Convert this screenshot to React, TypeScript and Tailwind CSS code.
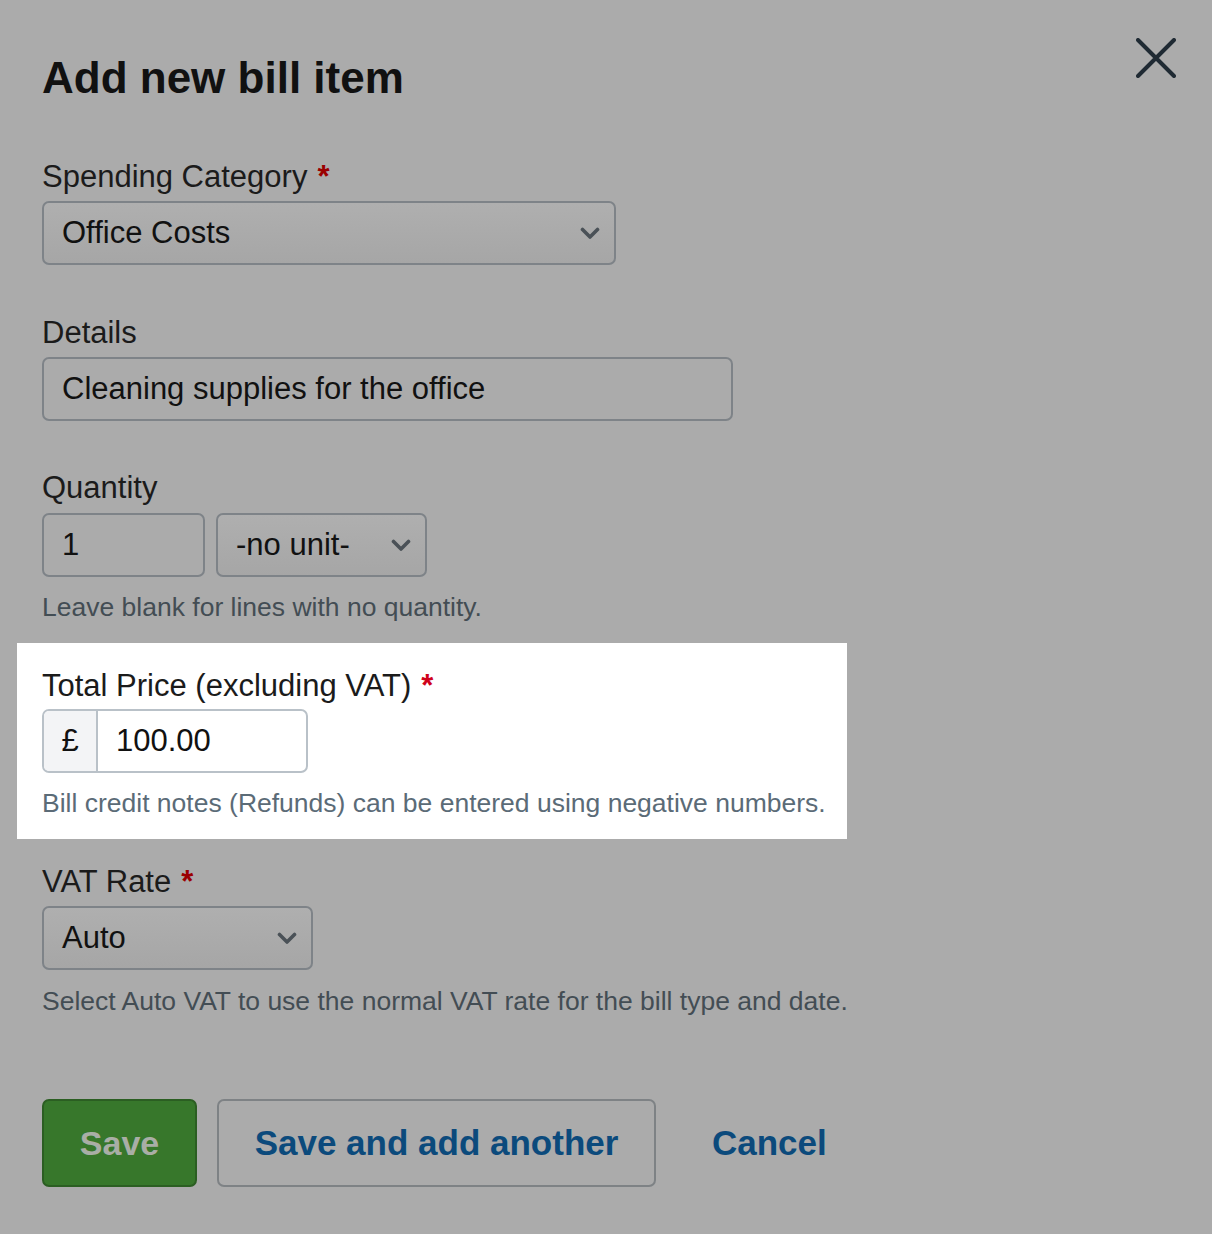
function Chevron() {
  return (
    <svg width="20" height="13" viewBox="0 0 20 13" className="shrink-0">
      <polyline points="2.5,2.5 10,10 17.5,2.5" fill="none" stroke="#4a5157" strokeWidth="3.6" strokeLinecap="round" strokeLinejoin="round" />
    </svg>
  );
}

function Label({ text, required, light }: { text: string; required?: boolean; light?: boolean }) {
  return (
    <div className="text-[31px] leading-[36px] text-[#1b1b1b]">
      {text}
      {required && (
        <span className={light ? "ml-[10px] font-bold text-[#d0021b]" : "ml-[10px] font-bold text-[#9b0000]"}>*</span>
      )}
    </div>
  );
}

function Select({ value, width }: { value: string; width: string }) {
  return (
    <div
      className={`${width} mt-[6px] flex h-[64px] items-center justify-between rounded-[7px] border-2 border-[#7e8388] bg-linear-to-b from-[#afafaf] to-[#a6a6a6] pl-[18px] pr-[14px] text-[31px] text-[#111]`}
    >
      <span>{value}</span>
      <Chevron />
    </div>
  );
}

export default function App() {
  return (
    <div className="min-h-screen bg-[#ababab] pt-[38px] pl-[42px] pr-[36px] font-['Liberation_Sans',Arial,sans-serif]">
      {/* header */}
      <div className="flex items-start justify-between">
        <h1 className="mt-[14px] text-[44px] font-bold leading-[52px] text-[#111]">Add new bill item</h1>
        <svg width="40" height="40" viewBox="0 0 40 40">
          <path d="M2 2 L38 38 M38 2 L2 38" stroke="#1f2a33" strokeWidth="4" strokeLinecap="round" />
        </svg>
      </div>

      {/* spending category */}
      <div className="mt-[55px]">
        <Label text="Spending Category" required />
        <Select value="Office Costs" width="w-[574px]" />
      </div>

      {/* details */}
      <div className="mt-[50px]">
        <Label text="Details" />
        <div className="mt-[6px] flex h-[64px] w-[691px] items-center rounded-[7px] border-2 border-[#7e8388] pl-[18px] text-[31px] text-[#111]">
          Cleaning supplies for the office
        </div>
      </div>

      {/* quantity */}
      <div className="mt-[49px]">
        <Label text="Quantity" />
        <div className="mt-[7px] flex gap-[11px]">
          <div className="flex h-[64px] w-[163px] items-center rounded-[7px] border-2 border-[#7e8388] pl-[18px] text-[31px] text-[#111]">
            1
          </div>
          <div className="-mt-[6px]">
            <Select value="-no unit-" width="w-[211px]" />
          </div>
        </div>
        <p className="mt-[14px] text-[26.5px] leading-[32px] text-[#434d54]">Leave blank for lines with no quantity.</p>
      </div>

      {/* total price, highlighted */}
      <div className="-ml-[25px] mt-[20px] w-fit bg-white pl-[25px] pr-[21px] pt-[25px] pb-[20px]">
        <Label text="Total Price (excluding VAT)" required light />
        <div className="mt-[5px] flex h-[64px] w-[266px] overflow-hidden rounded-[7px] border-2 border-[#b9c1c8] text-[31px] text-[#111]">
          <div className="flex w-[54px] items-center justify-center border-r-2 border-[#b9c1c8] bg-[#f3f4f6]">£</div>
          <div className="flex items-center pl-[18px]">100.00</div>
        </div>
        <p className="mt-[14px] text-[26.5px] leading-[32px] text-[#5b6b77]">
          Bill credit notes (Refunds) can be entered using negative numbers.
        </p>
      </div>

      {/* vat rate */}
      <div className="mt-[25px]">
        <Label text="VAT Rate" required />
        <Select value="Auto" width="w-[271px]" />
        <p className="mt-[15px] text-[26.5px] leading-[32px] text-[#434d54]">
          Select Auto VAT to use the normal VAT rate for the bill type and date.
        </p>
      </div>

      {/* actions */}
      <div className="mt-[82px] flex items-center">
        <button className="h-[88px] w-[155px] rounded-[7px] border-2 border-[#2b5e22] bg-[#37772b] text-[34px] font-bold text-[#a9aea6]">
          Save
        </button>
        <button className="ml-[20px] h-[88px] w-[439px] rounded-[7px] border-2 border-[#7e8285] text-[35px] font-bold text-[#0b4a7c]">
          Save and add another
        </button>
        <button className="ml-[56px] text-[35px] font-bold text-[#0b4a7c]">Cancel</button>
      </div>
    </div>
  );
}
